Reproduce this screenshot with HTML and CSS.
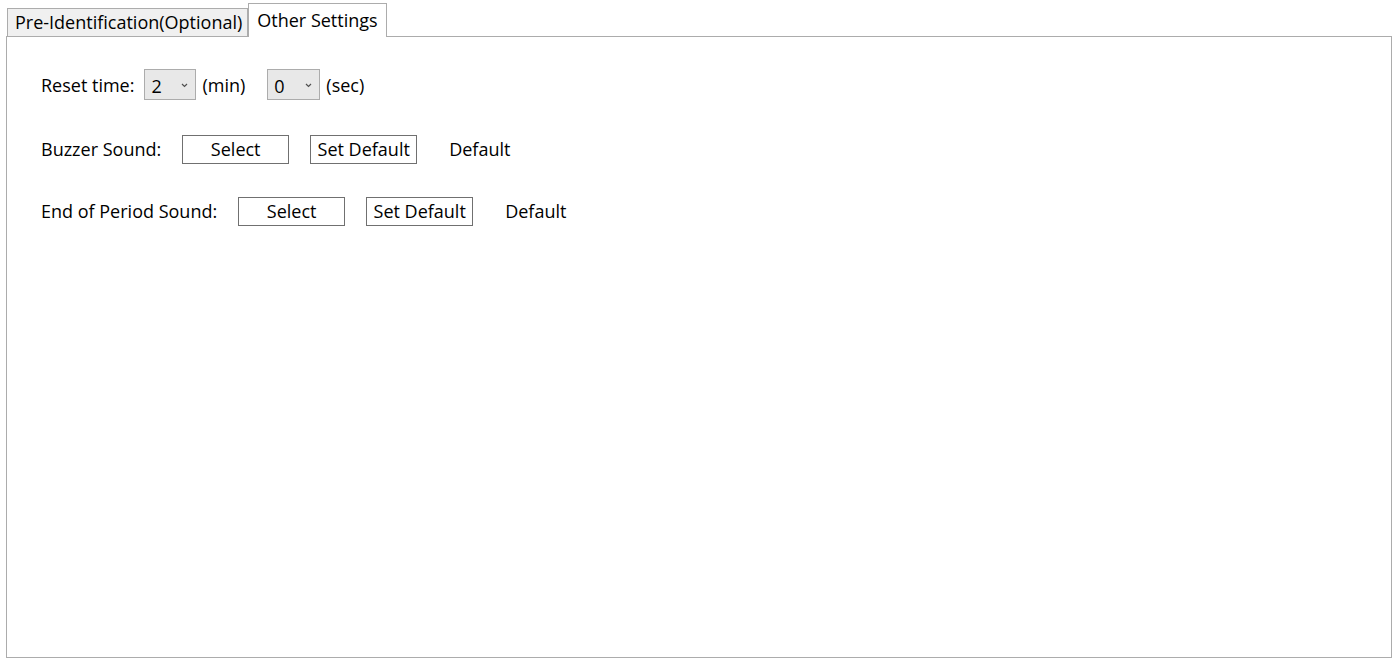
FILE: index.html
```html
<!DOCTYPE html>
<html lang="en">

<head>
    <meta charset="UTF-8">
    <title>Other Settings</title>
    <link rel="stylesheet" href="styles.css">
</head>

<body>
    <div class="tabs">
        <div class="tab">Pre-Identification(Optional)</div>
        <div class="tab active">Other Settings</div>
    </div>
    <div class="panel">
        <div class="row row-reset">
            <span class="label">Reset time:</span>
            <div class="combo">
                <span>2</span>
                <svg class="arrow" width="7" height="5" viewBox="0 0 7 5"><path d="M1 1 L3.5 3.5 L6 1" fill="none" stroke="#505050" stroke-width="1.2"/></svg>
            </div>
            <span class="unit">(min)</span>
            <div class="combo combo-sec">
                <span>0</span>
                <svg class="arrow" width="7" height="5" viewBox="0 0 7 5"><path d="M1 1 L3.5 3.5 L6 1" fill="none" stroke="#505050" stroke-width="1.2"/></svg>
            </div>
            <span class="unit">(sec)</span>
        </div>
        <div class="row">
            <span class="label">Buzzer Sound:</span>
            <button class="btn btn-select">Select</button>
            <button class="btn btn-default">Set Default</button>
            <span class="value">Default</span>
        </div>
        <div class="row">
            <span class="label">End of Period Sound:</span>
            <button class="btn btn-select">Select</button>
            <button class="btn btn-default">Set Default</button>
            <span class="value">Default</span>
        </div>
    </div>
</body>

</html>
```

FILE: styles.css
```css
*,
*:before,
*:after {
    box-sizing: border-box;
    margin: 0;
    padding: 0;
}

html,
body {
    width: 100%;
    height: 100%;
    overflow: hidden;
    background: #fff;
}

body {
    font-family: "Open Sans", "Noto Sans", sans-serif;
    font-size: 18px;
    color: #000;
    padding: 3px 7px 7px 6px;
    display: flex;
    flex-direction: column;
}

.tabs {
    display: flex;
    align-items: flex-end;
    padding-left: 1px;
    height: 33px;
    position: relative;
    z-index: 1;
}

.tab {
    height: 28px;
    padding: 0 5px 0 7px;
    line-height: 26px;
    background: #f0f0f0;
    border: 1px solid #acacac;
    border-bottom: none;
    white-space: nowrap;
}

.tab.active {
    height: 34px;
    margin-bottom: -1px;
    line-height: 32px;
    padding: 0 8px 0 8px;
    background: #fff;
}

.panel {
    flex: 1;
    border: 1px solid #acacac;
    padding: 32px 34px;
}

.row {
    display: flex;
    align-items: center;
    height: 30px;
    margin-bottom: 32px;
}

.row-reset {
    height: 31px;
    margin-bottom: 34px;
}

.label {
    margin-right: 21px;
}

.row-reset .label {
    margin-right: 10px;
}

.combo {
    display: flex;
    align-items: center;
    justify-content: space-between;
    width: 52px;
    height: 31px;
    padding: 3px 7px 0 6px;
    background: #e8e8e8;
    border: 1px solid #acacac;
}

.combo-sec {
    width: 53px;
}

.combo .arrow {
    margin-top: -2px;
}

.unit {
    margin-left: 6px;
    margin-right: 22px;
}

.btn {
    font: inherit;
    height: 29px;
    line-height: 25px;
    background: #fff;
    border: 1px solid #707070;
    margin-right: 21px;
}

.btn-select {
    width: 107px;
}

.btn-default {
    width: 107px;
    margin-right: 32px;
}
```
